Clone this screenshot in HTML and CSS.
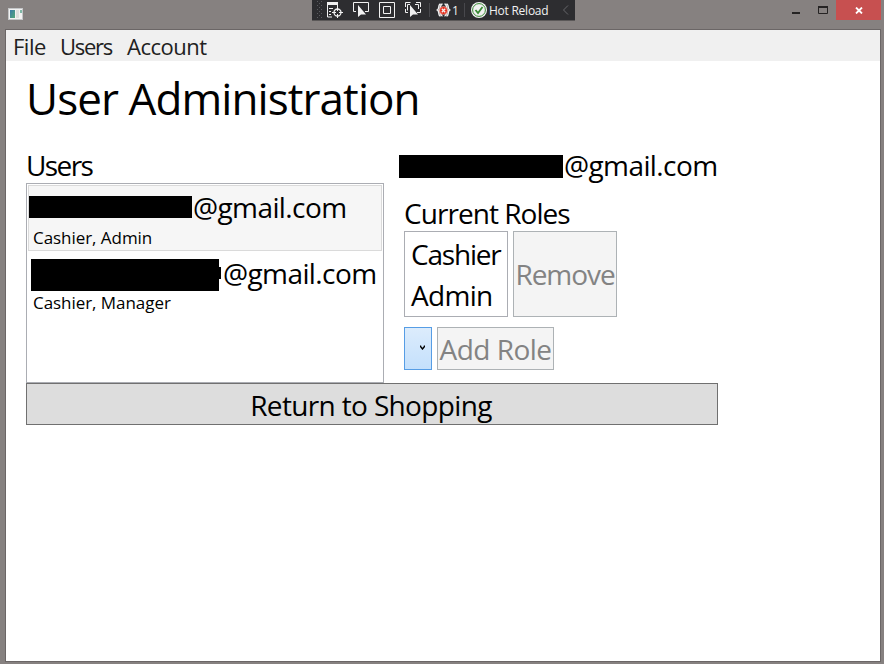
FILE: index.html
```html
<!DOCTYPE html>
<html lang="en">
<head>
<meta charset="utf-8">
<title>User Administration</title>
<link rel="stylesheet" href="styles.css">
</head>
<body>
<div class="window">
  <header class="titlebar">
    <svg class="app-icon" width="15" height="12" viewBox="0 0 15 12">
      <defs><linearGradient id="g" x1="0" y1="0" x2="1" y2="1"><stop offset="0" stop-color="#3b7ba8"/><stop offset="1" stop-color="#55a878"/></linearGradient></defs>
      <rect width="15" height="12" fill="#c4c6c8"/><rect x="1" y="1" width="13" height="10" fill="#f2f2f2"/>
      <rect x="2" y="2" width="5" height="8" fill="url(#g)"/><rect x="8" y="2" width="3" height="8" fill="#dedede"/><rect x="12" y="2" width="2" height="3" fill="#7fb8a6"/>
    </svg>
    <div class="debug-bar">
      <svg class="debug-icons" width="146" height="20" viewBox="0 0 146 20" fill="none" stroke="#f1f1f1">
        <g stroke="#5c5c60" stroke-dasharray="1 3"><path d="M5.5 1v18M9.5 1v18"/><path d="M7.5 3v16"/></g>
        <path stroke="none" fill="#f1f1f1" d="M15 2h11v3H15z"/>
        <path d="M15.500 4v13H20M25.500 4v3M17 8.500h4M17 11.500h2M17 14.500h2"/>
        <circle cx="25.500" cy="12.500" r="3.500" stroke-width="1.300"/><path d="M25.500 7v4M25.500 14v4M20 12.500h4M27 12.500h4"/>
        <path d="M44 11.500h-2.500v-9h15v9H53"/>
        <path stroke="none" fill="#f1f1f1" d="M46 5v12l3-2.500h5zM98 5v12l3-2.500h5z"/>
        <path d="M67.500 2.500h15v15h-15zM71.500 6.500h7v7h-7z"/>
        <path d="M93.500 7V2.500h5M104 2.500h4.500V7M93.500 9v3.500H96M105 12.500h3.500V9M98 4.500h-2.500v6M103 4.500h3.500V9"/>
        <path stroke="#48484c" d="M117.500 3v14"/>
        <path stroke-width="1.400" d="M128.500 4c-2.500 0-1 5-3 6 2 1 .5 6 3 6M134.500 4c2.500 0 1 5 3 6-2 1-.5 6-3 6M130.500 4c-2.500 0-2 5-3 6 1 1 .5 6 3 6M132.500 4c2.500 0 2 5 3 6-1 1-.5 6-3 6"/>
        <circle cx="131.500" cy="10.500" r="4" fill="#e5311f" stroke="#f7cdc8" stroke-width=".5"/><path stroke-width="1.300" d="M129.800 8.800l3.400 3.400M133.200 8.800l-3.400 3.400"/>
      </svg>
      <span class="error-count">1</span>
      <span class="separator"></span>
      <svg class="reload-icon" width="16" height="16" viewBox="0 0 16 16"><circle cx="8" cy="8" r="8" fill="#f1f1f1"/><circle cx="8" cy="8" r="6.400" fill="#f1f1f1" stroke="#388a34"/><path d="M4.500 8l2.500 3 4.500-6" fill="none" stroke="#388a34" stroke-width="1.800"/></svg>
      <span class="reload-label">Hot Reload</span>
      <svg class="collapse-icon" width="8" height="12" viewBox="0 0 8 12"><path d="M6 1.500L1.500 6 6 10.500" fill="none" stroke="#66666a"/></svg>
    </div>
    <div class="window-controls">
      <svg width="54" height="20" viewBox="0 0 54 20"><path d="M10 12h8v2h-8z" fill="#252323"/><path d="M36.500 6.500h9v7h-9z" fill="none" stroke="#252323"/><path d="M36 6h10v2H36z" fill="#252323"/></svg>
      <div class="close"><svg width="8" height="7" viewBox="0 0 8 7"><path d="M1 .5l6 6M7 .5l-6 6" stroke="#fff" stroke-width="1.800"/></svg></div>
    </div>
  </header>
  <div class="client">
    <nav class="menu"><span class="m-file">File</span><span class="m-users">Users</span><span class="m-account">Account</span></nav>
    <main>
      <h1>User Administration</h1>
      <div class="columns">
        <section class="users">
          <h2>Users</h2>
          <ul class="user-list">
            <li class="selected">
              <div class="email"><span class="redact r-one"></span>@gmail.com</div>
              <div class="roles">Cashier, Admin</div>
            </li>
            <li>
              <div class="email raised"><span class="redact r-two"></span><span class="peek"></span>@gmail.com</div>
              <div class="roles manager">Cashier, Manager</div>
            </li>
          </ul>
        </section>
        <section class="detail">
          <div class="email raised"><span class="redact r-detail"></span>@gmail.com</div>
          <div class="role-editor">
            <h2 class="current">Current Roles</h2>
            <div class="row">
              <ul class="role-list"><li class="r-cashier">Cashier</li><li class="r-admin">Admin</li></ul>
              <button class="remove" disabled>Remove</button>
            </div>
            <div class="row add-row">
              <div class="combo"><svg width="5" height="5" viewBox="0 0 5 5"><path d="M.5 .5v1L2.500 4l2-2.500v-1" fill="none" stroke="#000" stroke-width="1.400"/></svg></div>
              <button class="add" disabled>Add Role</button>
            </div>
          </div>
        </section>
      </div>
      <button class="return">Return to Shopping</button>
    </main>
  </div>
</div>
</body>
</html>
```
FILE: styles.css
```css
* { box-sizing: border-box; }
body {
  margin: 0;
  font: 28px/38px "Open Sans", "Noto Sans", sans-serif;
  color: #000;
  letter-spacing: -0.5px;
}
h1, h2, ul { margin: 0; padding: 0; font-weight: 400; list-style: none; }
.window {
  height: 664px;
  padding: 0 3px 2px 5px;
  background: #868180;
  overflow: hidden;
}
.titlebar {
  display: grid;
  grid-template-columns: 307px 263px 1fr;
  height: 29px;
}
.app-icon { margin: 8px 0 0 3px; }
.debug-bar {
  display: flex;
  align-items: center;
  height: 20px;
  background: #2d2d30;
  box-shadow: 0 1px #5b5858;
  color: #f1f1f1;
  font-size: 12px;
  line-height: 20px;
  letter-spacing: 0;
}
.debug-icons { flex: none; margin-right: -6px; }
.error-count { width: 12px; padding-top: 1px; }
.separator { width: 1px; height: 14px; margin-right: 6px; background: #48484c; }
.reload-label { width: 70px; margin-left: 2px; padding-top: 1px; letter-spacing: -0.25px; white-space: nowrap; }
.collapse-icon { margin-left: 3px; }
.window-controls { display: flex; justify-content: flex-end; height: 20px; }
.close {
  display: flex;
  align-items: center;
  justify-content: center;
  width: 45px;
  background: #c75050;
}
.client {
  width: 876px;
  height: 633px;
  border: 1px solid #6b6666;
  background: #fff;
}
.menu {
  display: flex;
  height: 31px;
  padding: 0 7px;
  background: #f0f0f0;
  font-size: 22px;
  line-height: 32px;
  color: #212121;
}
.m-file { width: 47px; }
.m-users { width: 67px; letter-spacing: -1.3px; }
main { width: 712px; padding-left: 20px; }
h1 {
  height: 86px;
  padding-top: 7px;
  font-size: 44px;
  line-height: 60px;
  letter-spacing: -0.92px;
  white-space: nowrap;
}
.columns { display: flex; gap: 15px; height: 236px; }
.users { flex: none; width: 358px; }
h2 { height: 36px; font-size: 28px; line-height: 36px; letter-spacing: -1.6px; }
.user-list { height: 200px; padding: 1px; border: 1px solid #abadb3; }
.user-list li { height: 65px; padding: 4px 0 0 3px; }
.user-list li.selected { height: 66px; padding: 2px 0 0; border: 1px solid #dadada; background: #f6f6f6; }
.email {
  display: flex;
  align-items: center;
  height: 38px;
  line-height: 36px;
  letter-spacing: -0.6px;
  white-space: nowrap;
}
.email.raised { padding-bottom: 2px; }
.selected .roles { margin-top: 2px; }
.redact { flex: none; background: #000; }
.r-one { width: 163px; height: 22px; margin-right: 1px; }
.r-two { width: 188px; height: 32px; margin-top: 4px; }
.peek { width: 2px; height: 12px; margin-right: 2px; background: #000; }
.r-detail { width: 164px; height: 23px; margin-top: 2px; margin-right: 1px; }
.roles { height: 20px; padding-left: 4px; font-size: 17px; line-height: 20px; letter-spacing: -0.05px; }
.roles.manager { padding-left: 2px; }
.role-editor { padding: 10px 0 0 5px; }
h2.current { letter-spacing: -0.95px; }
.row { display: flex; gap: 5px; }
.role-list { width: 104px; height: 86px; padding: 3px 6px; border: 1px solid #abadb3; }
.role-list li { height: 41px; }
.role-list .r-cashier { letter-spacing: -1.2px; }
.role-list .r-admin { letter-spacing: -0.7px; }
button {
  padding: 0;
  border: 1px solid #adb2b5;
  background: #f4f4f4;
  color: #838383;
  font: inherit;
  letter-spacing: inherit;
  white-space: nowrap;
}
.remove { width: 104px; height: 86px; letter-spacing: -1.05px; }
.add-row { margin-top: 10px; }
.combo {
  display: flex;
  align-items: center;
  justify-content: flex-end;
  width: 28px;
  height: 43px;
  padding: 0 6px 2px 0;
  border: 1px solid #569de5;
  background: linear-gradient(#dcecfc, #c4e0fc);
}
.add { width: 117px; height: 43px; }
.return {
  display: block;
  width: 692px;
  height: 42px;
  padding: 2px 2px 0 0;
  border-color: #707070;
  background: #ddd;
  color: #000;
  letter-spacing: -0.65px;
}
```
